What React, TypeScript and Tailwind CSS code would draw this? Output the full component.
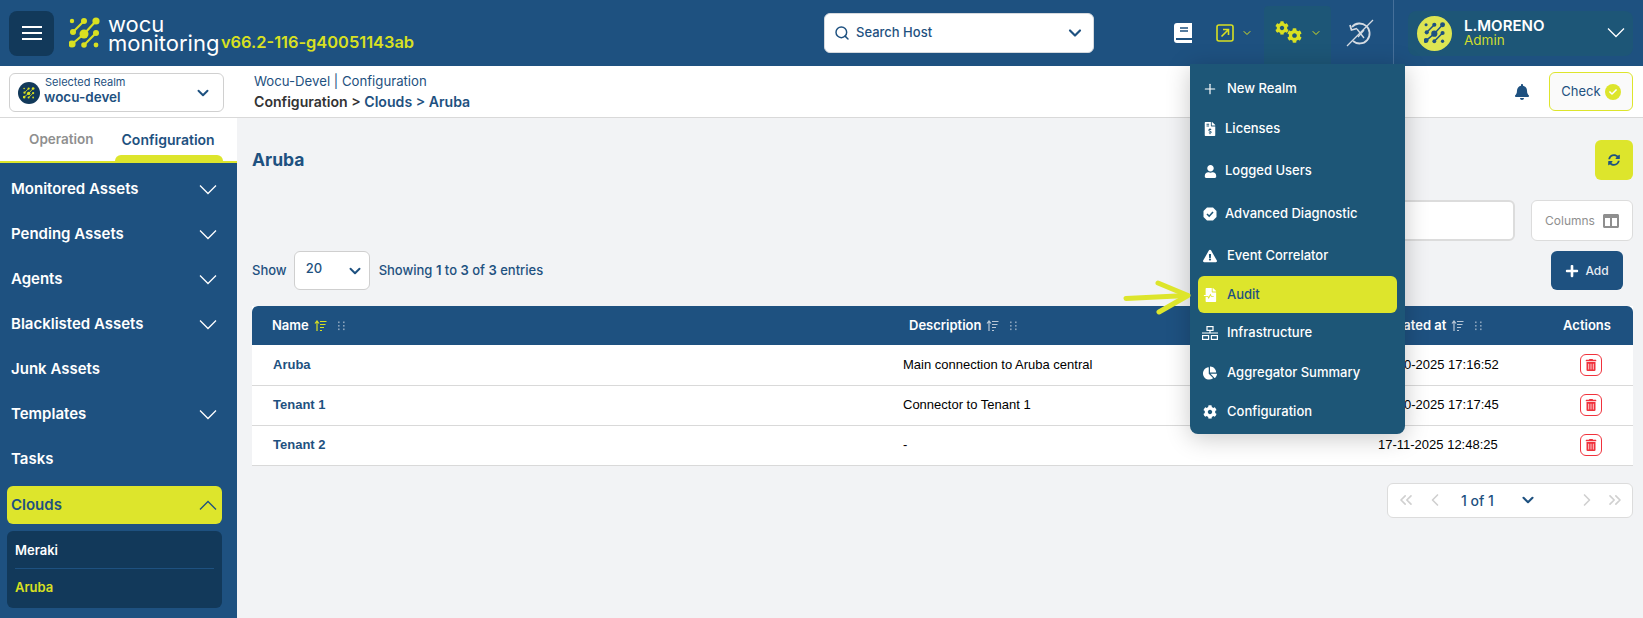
import React from "react";
import {
  FaBell,
  FaChartPie,
  FaCheck,
  FaCog,
  FaColumns,
  FaExclamationTriangle,
  FaFileInvoiceDollar,
  FaFileMedicalAlt,
  FaSyncAlt,
  FaTrashAlt,
  FaUser,
  FaPlus,
} from "react-icons/fa";
import { ChevronDown, ChevronLeft, ChevronRight, ChevronsLeft, ChevronsRight, Plus, Search } from "lucide-react";

const WideChevron = ({ up = false, color = "#ffffff" }: { up?: boolean; color?: string }) => (
  <svg width="18" height="10" viewBox="0 0 18 10" fill="none" stroke={color} strokeWidth="1.3">
    <polyline points={up ? "1,9.5 9,1.5 17,9.5" : "1,0.5 9,8.5 17,0.5"} />
  </svg>
);

const Logo = ({ size = 32, color = "#d9e021" }: { size?: number; color?: string }) => (
  <svg width={size} height={size} viewBox="0 0 32 32" fill={color} stroke={color}>
    <circle cx="3" cy="4" r="2.2" stroke="none" />
    <circle cx="15" cy="4" r="3" stroke="none" />
    <circle cx="27" cy="4" r="3.6" stroke="none" />
    <circle cx="4" cy="15" r="3" stroke="none" />
    <path d="M4 15 L15 4" strokeWidth="2.2" fill="none" />
    <circle cx="15" cy="17" r="4.5" stroke="none" />
    <path d="M27 4 L15 17 L3 27" strokeWidth="2.2" fill="none" />
    <circle cx="3" cy="27" r="3.6" stroke="none" />
    <circle cx="27" cy="16" r="3" stroke="none" />
    <path d="M27 16 L15 28" strokeWidth="2.2" fill="none" />
    <circle cx="15" cy="28" r="2.8" stroke="none" />
    <circle cx="27" cy="28" r="2.4" stroke="none" />
  </svg>
);

const BookIcon = () => (
  <svg width="18" height="20" viewBox="0 0 18 20">
    <path d="M3 0 H18 V20 H3 A3 3 0 0 1 0 17 V3 A3 3 0 0 1 3 0 Z" fill="#ffffff" />
    <path d="M6 5 H14 M6 8 H14" stroke="#1e5180" strokeWidth="1.4" />
    <rect x="2" y="15" width="16" height="2" fill="#1e5180" />
  </svg>
);

const ExportIcon = () => (
  <svg width="18" height="18" viewBox="0 0 18 18" fill="none" stroke="#d9e021" strokeWidth="1.6">
    <rect x="1" y="1" width="16" height="16" rx="2" />
    <path d="M5.5 12.5 L12.5 5.5 M7 5.5 H12.5 V11" />
  </svg>
);

const SyncOff = () => (
  <svg width="28" height="28" viewBox="0 0 28 28" fill="none" stroke="#d5dbe2" strokeWidth="1.8">
    <path d="M6 8 A10 10 0 1 1 7 22" />
    <path d="M4 6 L5.5 11 L11 9.5" />
    <path d="M11 10 L18 19 M18 11 L12 18" strokeWidth="1.4" />
    <path d="M27 1 L1 27" strokeWidth="1.2" />
  </svg>
);

const SortIcon = ({ active = false }: { active?: boolean }) => (
  <svg width="13" height="12" viewBox="0 0 13 12" fill="none" stroke={active ? "#d9e021" : "#b9c7d6"} strokeWidth="1.2">
    <path d="M3 11 V1.5 M1 3.5 L3 1 L5 3.5" />
    <path d="M6 1.5 H12.5 M6 4.5 H11.5 M6 7.5 H10 M6 10.5 H8" />
  </svg>
);

const Grip = () => (
  <svg width="8" height="10" viewBox="0 0 8 10" fill="#8aa3bc">
    {[0.5, 4, 7.5].map((y) =>
      [1, 6].map((x) => <rect key={`${x}-${y}`} x={x} y={y} width="1.6" height="1.6" />)
    )}
  </svg>
);

const BigArrow = () => (
  <svg width="68" height="38" viewBox="0 0 68 38" fill="none" stroke="#dde52c" strokeWidth="5" strokeLinecap="round" strokeLinejoin="round">
    <path d="M3 19.5 L64 16.5" />
    <path d="M35 4 L65 16.5 L36 33" />
  </svg>
);

const BadgeCheck = () => (
  <svg width="14" height="14" viewBox="0 0 14 14">
    <polygon points="4,0.5 10,0.5 13.5,4 13.5,10 10,13.5 4,13.5 0.5,10 0.5,4" fill="#ffffff" />
    <path d="M4 7 L6.2 9.2 L10 5" fill="none" stroke="#1d5677" strokeWidth="1.6" />
  </svg>
);

const SiteMap = () => (
  <svg width="16" height="14" viewBox="0 0 16 14" fill="none" stroke="#ffffff" strokeWidth="1.2">
    <rect x="5" y="0.6" width="6" height="3.8" />
    <rect x="0.6" y="9.6" width="6" height="3.8" />
    <rect x="9.4" y="9.6" width="6" height="3.8" />
    <path d="M0 7 H16 M8 4.4 V7" />
  </svg>
);

const menuItems = [
  { label: "Monitored Assets", chevron: true },
  { label: "Pending Assets", chevron: true },
  { label: "Agents", chevron: true },
  { label: "Blacklisted Assets", chevron: true },
  { label: "Junk Assets", chevron: false },
  { label: "Templates", chevron: true },
  { label: "Tasks", chevron: false },
];

const dropdownItems = [
  { label: "New Realm", icon: <Plus size={16} strokeWidth={1.8} />, h: "h-[40px]", textGap: "ml-[9px]" },
  { label: "Licenses", icon: <FaFileInvoiceDollar size={14} />, h: "h-[40px]", textGap: "ml-[7px]" },
  { label: "Logged Users", icon: <FaUser size={13} />, h: "h-[44px]", textGap: "ml-[7px]" },
  { label: "Advanced Diagnostic", icon: <BadgeCheck />, h: "h-[42px]", textGap: "ml-[7px]" },
  { label: "Event Correlator", icon: <FaExclamationTriangle size={14} />, h: "h-[41px]", textGap: "ml-[9px]" },
  { label: "Infrastructure", icon: <SiteMap />, h: "h-[40px]", textGap: "ml-[9px]" },
  { label: "Aggregator Summary", icon: <FaChartPie size={14} />, h: "h-[39px]", textGap: "ml-[9px]" },
  { label: "Configuration", icon: <FaCog size={14} />, h: "h-[39px]", textGap: "ml-[9px]" },
];

const DropdownRow = ({ item }: { item: (typeof dropdownItems)[number] }) => (
  <div className={`${item.h} flex items-center pl-[12px] text-white text-[13px] font-medium`}>
    <span className="w-[16px] flex justify-center">{item.icon}</span>
    <span className={item.textGap}>{item.label}</span>
  </div>
);

const rows = [
  { name: "Aruba", description: "Main connection to Aruba central", date: "17-10-2025 17:16:52" },
  { name: "Tenant 1", description: "Connector to Tenant 1", date: "17-10-2025 17:17:45" },
  { name: "Tenant 2", description: "-", date: "17-11-2025 12:48:25" },
];

export default function App() {
  return (
    <div className="relative w-[1643px] h-[618px] overflow-hidden bg-[#f2f3f5] font-['Inter',sans-serif] text-[#1e5180]">
      {/* top bar */}
      <header className="h-[66px] bg-[#1e5180] flex items-center pl-[9px] pr-[10px]">
        <div className="w-[815px] shrink-0 flex items-center">
          <button className="w-[45px] h-[45px] rounded-lg bg-[#12395a] flex items-center justify-center text-white">
            <svg width="20" height="16" viewBox="0 0 20 16" stroke="#ffffff" strokeWidth="2">
              <path d="M0 2 H20 M0 8 H20 M0 14 H20" />
            </svg>
          </button>
          <div className="ml-[15px]"><Logo /></div>
          <div className="ml-[7px] w-[110px] text-white text-[22px] leading-[19px] pt-[2px]">
            <div>wocu</div>
            <div>monitoring</div>
          </div>
          <span className="ml-[3px] mt-[18px] whitespace-nowrap text-[16.4px] font-semibold text-[#d9e021]">v66.2-116-g40051143ab</span>
        </div>
        <div className="w-[270px] h-[40px] bg-white rounded-md border border-[#d5d9de] flex items-center pl-[9px] pr-[8px] text-[13px] font-medium">
          <Search size={16} strokeWidth={2.2} />
          <span className="ml-[6px] flex-1">Search Host</span>
          <ChevronDown size={20} strokeWidth={2.6} />
        </div>
        <div className="ml-[80px]"><BookIcon /></div>
        <div className="ml-[24px] flex items-center text-[#d9e021]">
          <ExportIcon />
          <ChevronDown size={12} className="ml-[7px]" />
        </div>
        <div className="ml-[11px] w-[67px] h-[58px] bg-[#1d5677] rounded-t flex items-center pl-[11px] text-[#d9e021] mt-[4px] pb-[4px]">
          <FaCog size={14} className="-mt-[11px]" />
          <FaCog size={15} className="-ml-[2px] mt-[4px]" />
          <ChevronDown size={12} className="ml-[8px]" />
        </div>
        <div className="ml-[15px]"><SyncOff /></div>
        <div className="ml-[19px] w-px h-[66px] bg-[#46709a]" />
        <div className="ml-[14px] w-[225px] h-[45px] rounded-lg bg-[#1d5677] flex items-center pl-[9px] pr-[8px]">
          <div className="w-[35px] h-[35px] rounded-full bg-[#dde552] flex items-center justify-center">
            <Logo size={22} color="#1e5180" />
          </div>
          <div className="ml-[12px] flex-1 leading-[14px]">
            <div className="text-white text-[15px] font-semibold">L.MORENO</div>
            <div className="text-[#d0dc2e] text-[13.5px]">Admin</div>
          </div>
          <WideChevron color="#ffffff" />
        </div>
      </header>

      {/* realm and breadcrumb bar */}
      <div className="h-[52px] bg-white border-b border-[#d9d9d9] flex items-center pl-[9px] pr-[10px]">
        <div className="w-[215px] h-[39px] mt-[2px] rounded-md border border-[#d0d0d0] flex items-center pl-[8px] pr-[11px]">
          <div className="w-[22px] h-[22px] rounded-full bg-[#12395a] flex items-center justify-center">
            <Logo size={12} />
          </div>
          <div className="ml-[4px] flex-1 leading-[15px] -mt-[5px]">
            <div className="text-[11px] pl-[1px]">Selected Realm</div>
            <div className="text-[13.5px] font-semibold">wocu-devel</div>
          </div>
          <ChevronDown size={18} strokeWidth={2.6} />
        </div>
        <div className="ml-[30px] leading-[20px] text-[13.2px] -mt-[1px]">
          <div>Wocu-Devel | Configuration</div>
          <div className="text-[14.1px] font-semibold mt-[1px]"><span className="text-[#333333]">Configuration &gt;</span> Clouds &gt; Aruba</div>
        </div>
        <div className="ml-auto flex items-center">
          <FaBell size={16} />
          <div className="ml-[19px] w-[84px] h-[39px] rounded-md border border-[#dde52c] bg-[#fafafa] flex items-center justify-center text-[13px]">
            Check
            <span className="ml-[4px] w-[16px] h-[16px] rounded-full bg-[#dde52c] flex items-center justify-center text-white"><FaCheck size={8} /></span>
          </div>
        </div>
      </div>

      <div className="flex h-[500px]">
        {/* sidebar */}
        <aside className="w-[237px] shrink-0 bg-[#1e5180] flex flex-col">
          <div className="relative h-[45px] bg-white border-b-[2px] border-[#dde52c] flex font-semibold">
            <span className="ml-[29px] mt-[11px] text-[13.5px] text-[#8f8f8f]">Operation</span>
            <span className="ml-[28px] mt-[11px] text-[14px]">Configuration</span>
            <span className="absolute left-[115px] bottom-0 w-[108px] h-[6px] rounded-t-md bg-[#dde52c]" />
          </div>
          <nav className="pl-[7px] pr-[15px] pt-[4px]">
            {menuItems.map((item) => (
              <div key={item.label} className="h-[45px] pl-[4px] pr-[5px] flex items-center justify-between text-white text-[15px] font-semibold">
                <span>{item.label}</span>
                {item.chevron && <WideChevron />}
              </div>
            ))}
            <div className="mt-[4px] h-[38px] rounded-md bg-[#dde52c] pl-[4px] pr-[5px] flex items-center justify-between text-[15px] font-semibold">
              <span>Clouds</span>
              <WideChevron up color="#1e5180" />
            </div>
            <div className="mt-[7px] h-[77px] rounded-md bg-[#12395a] px-[8px] text-[13px] font-semibold">
              <div className="h-[38px] pt-[2px] flex items-center border-b border-[#1e5180] text-white">Meraki</div>
              <div className="h-[38px] flex items-center text-[#d9e021]">Aruba</div>
            </div>
          </nav>
        </aside>

        {/* content */}
        <main className="flex-1 pt-[22px] pl-[15px] pr-[10px]">
          <div className="h-[40px] flex items-center justify-between">
            <h1 className="text-[17.5px] font-bold">Aruba</h1>
            <button className="w-[38px] h-[40px] rounded-md bg-[#dde52c] flex items-center justify-center"><FaSyncAlt size={12} /></button>
          </div>
          <div className="mt-[20px] h-[41px] flex justify-end">
            <div className="w-[230px] h-[41px] rounded-md bg-white border-2 border-[#dcdcdc]" />
            <div className="ml-[16px] w-[102px] h-[41px] rounded-md bg-white border border-[#dcdcdc] flex items-center justify-center text-[12px] text-[#8f8f8f]">
              Columns
              <FaColumns size={16} className="ml-[8px]" />
            </div>
          </div>
          <div className="mt-[10px] h-[39px] flex items-center text-[13px] font-medium">
            <span>Show</span>
            <div className="ml-[7px] w-[76px] h-[39px] rounded-md bg-white border border-[#cfcfcf] flex justify-between items-center pl-[11px] pr-[5px]">
              <span className="-mt-[4px]">20</span>
              <ChevronDown size={18} strokeWidth={2.6} />
            </div>
            <span className="ml-[9px]">Showing <b className="font-semibold">1</b> to <b className="font-semibold">3</b> of <b className="font-semibold">3</b> entries</span>
            <button className="ml-auto mr-[10px] w-[72px] h-[39px] rounded-md bg-[#1e5180] text-[#e6ecf2] text-[12px] flex items-center justify-center">
              <FaPlus size={14} className="text-white mr-[6px]" />Add
            </button>
          </div>
          <table className="mt-[16px] w-full table-fixed border-collapse bg-white">
            <thead>
              <tr className="h-[39px] bg-[#1e5180] text-white text-[13px] font-semibold text-left">
                <th className="w-[631px] pl-[20px] font-semibold rounded-tl-md">
                  <span className="flex items-center">Name<span className="ml-[5px]"><SortIcon active /></span><span className="ml-[10px]"><Grip /></span></span>
                </th>
                <th className="w-[485px] pl-[26px] font-semibold">
                  <span className="flex items-center">Description<span className="ml-[5px]"><SortIcon /></span><span className="ml-[10px]"><Grip /></span></span>
                </th>
                <th className="pl-[13px] font-semibold">
                  <span className="flex items-center">Created at<span className="ml-[5px]"><SortIcon /></span><span className="ml-[10px]"><Grip /></span></span>
                </th>
                <th className="w-[90px] text-center font-semibold rounded-tr-md pr-[2px]">Actions</th>
              </tr>
            </thead>
            <tbody>
              {rows.map((row) => (
                <tr key={row.name} className="h-[40px] border-b border-[#d9d9d9] text-[13px] font-['Liberation_Sans',sans-serif] text-black">
                  <td className="pl-[21px] font-bold text-[#1e5180]">{row.name}</td>
                  <td className="pl-[20px]">{row.description}</td>
                  <td className="pl-[10px] whitespace-nowrap">{row.date}</td>
                  <td className="text-center pl-[6px]">
                    <button className="w-[22px] h-[22px] rounded-md border border-[#f0323c] inline-flex items-center justify-center text-[#f0323c] align-middle">
                      <FaTrashAlt size={12} />
                    </button>
                  </td>
                </tr>
              ))}
            </tbody>
          </table>
          <div className="mt-[17px] flex justify-end">
            <div className="w-[246px] h-[35px] rounded-md bg-white border border-[#dcdcdc] flex items-center pl-[8px] text-[#d0d0d0]">
              <ChevronsLeft size={20} />
              <ChevronLeft size={20} className="ml-[9px]" />
              <span className="ml-[16px] w-[58px] text-[14px] font-medium text-[#1e5180]">1 of 1</span>
              <ChevronDown size={18} strokeWidth={2.8} className="text-[#1e5180]" />
              <ChevronRight size={20} className="ml-[40px]" />
              <ChevronsRight size={20} className="ml-[8px]" />
            </div>
          </div>
        </main>
      </div>

      {/* settings menu, open over the page */}
      <div className="absolute left-[1190px] top-[64px] w-[215px] h-[370px] rounded-b-lg bg-[#1d5677] shadow-[0_4px_24px_rgba(0,0,0,0.22)] pt-[5px]">
        {dropdownItems.slice(0, 5).map((item) => <DropdownRow key={item.label} item={item} />)}
        <div className="mx-[8px] h-[37px] rounded-md bg-[#dde52c] flex items-center pl-[4px] text-[13px] font-medium">
          <span className="w-[16px] flex justify-center text-white"><FaFileMedicalAlt size={14} /></span>
          <span className="ml-[9px]">Audit</span>
        </div>
        {dropdownItems.slice(5).map((item) => <DropdownRow key={item.label} item={item} />)}
      </div>
      <div className="absolute left-[1123px] top-[279px]"><BigArrow /></div>
    </div>
  );
}
